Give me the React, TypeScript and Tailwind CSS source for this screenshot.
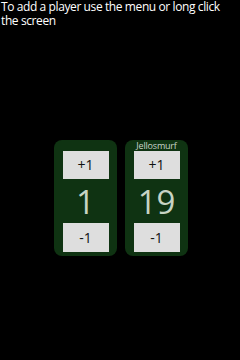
const PLAYERS = [
  { name: '', score: 1 },
  { name: 'Jellosmurf', score: 19 },
];

function PlayerCard({ name, score }: { name: string; score: number }) {
  return (
    <div className="w-[63px] h-[116px] bg-[#0f3312] rounded-[8px] flex flex-col items-center pb-[4px]">
      <div className="h-[11px] text-[9px] leading-[11px] text-[#c9d4c9] tracking-[-0.2px]">{name}</div>
      <button className="w-[46px] h-[28px] bg-[#dedede] text-[#111] text-[14px] leading-none flex items-center justify-center">
        +1
      </button>
      <div className="flex-1 flex items-center justify-center text-[33px] leading-none text-[#c7d4c4]">{score}</div>
      <button className="w-[46px] h-[29px] bg-[#dedede] text-[#111] text-[14px] leading-none flex items-center justify-center">
        -1
      </button>
    </div>
  );
}

export default function App() {
  return (
    <div
      className="w-[240px] h-[360px] bg-black flex flex-col"
      style={{ fontFamily: '"Open Sans", "Noto Sans", sans-serif' }}
    >
      <p className="px-[1px] text-[12px] leading-[14px] tracking-[-0.4px] text-white">
        To add a player use the menu or long click the screen
      </p>
      {/* player cards */}
      <div className="flex-1 flex items-center justify-center gap-[8px] pt-[8px] pl-[2px]">
        {PLAYERS.map((p) => (
          <PlayerCard key={p.name || 'p0'} name={p.name} score={p.score} />
        ))}
      </div>
    </div>
  );
}
